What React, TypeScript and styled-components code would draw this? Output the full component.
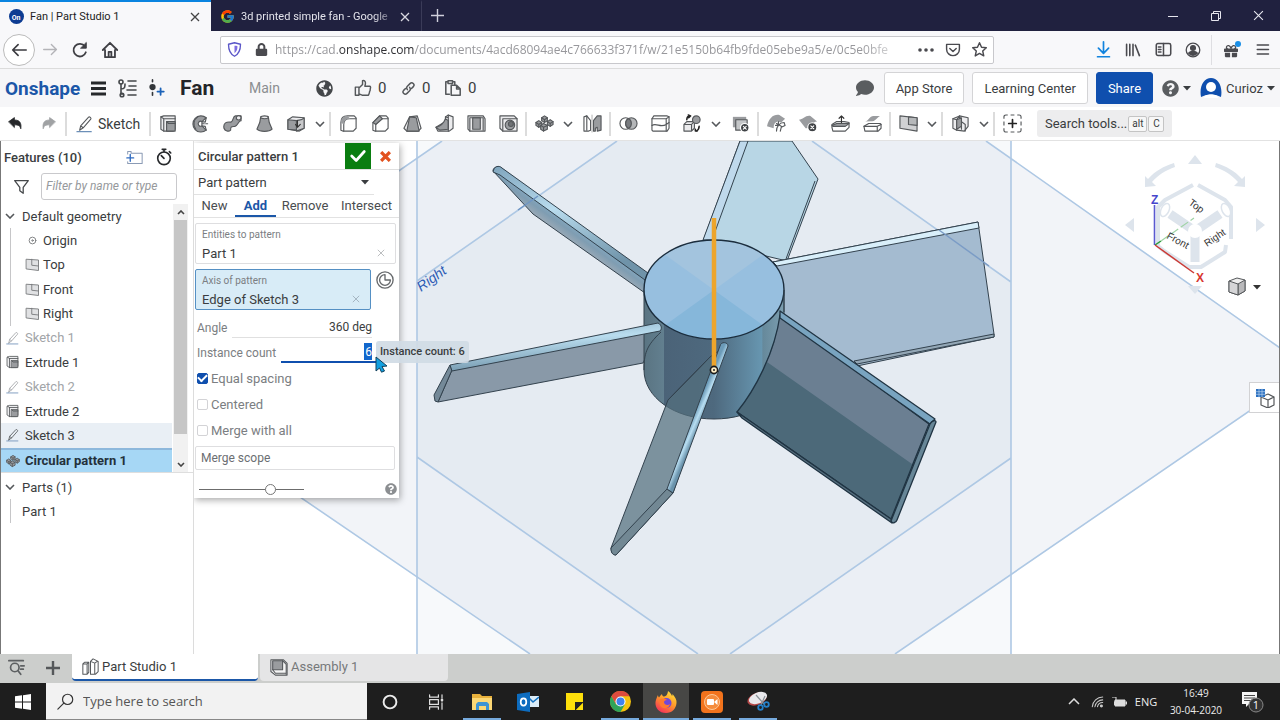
import React from "react";
import styled, { createGlobalStyle, css } from "styled-components";
import { FcGoogle } from "react-icons/fc";
import { FaGlobeAmericas, FaComment, FaLock, FaQuestionCircle, FaGift } from "react-icons/fa";

const ui = `Roboto, "Liberation Sans", sans-serif`;
const sys = `"Open Sans", "Noto Sans", sans-serif`;
const blue = "#0f4fae";

const Global = createGlobalStyle`
  * { box-sizing: border-box; }
  body { margin: 0; font-family: ${ui}; font-size: 13px; color: #3a3d40; background: #fff; }
  button, input, select { font: inherit; color: inherit; }
  button { background: none; border: 0; padding: 0; cursor: pointer; }
  a { color: inherit; text-decoration: none; }
  ul { margin: 0; padding: 0; list-style: none; }
  svg { display: block; flex: none; }
`;

const Page = styled.div`
  display: flex;
  flex-direction: column;
  min-height: 100vh;
`;
const Spacer = styled.div`
  flex: 1;
`;

/* ---------- browser chrome ---------- */
const TitleBar = styled.header`
  display: flex;
  height: 31px;
  background: #20213f;
  font-size: 11px;
`;
const BrowserTab = styled.div<{ $active?: boolean }>`
  display: flex;
  align-items: center;
  gap: 6px;
  width: 211px;
  padding: 0 8px 0 9px;
  color: ${(p) => (p.$active ? "#1c1c22" : "#e2e2ea")};
  background: ${(p) => (p.$active ? "#f8f8fa" : "transparent")};
  border-top: 2px solid ${(p) => (p.$active ? "#0a84e0" : "transparent")};
  border-right: ${(p) => (p.$active ? "0" : "1px solid #3a3b58")};
`;
const TabLabel = styled.a<{ $fade?: boolean }>`
  flex: 1;
  overflow: hidden;
  white-space: nowrap;
  ${(p) =>
    p.$fade &&
    css`
      mask-image: linear-gradient(90deg, #000 88%, rgba(0, 0, 0, 0.3));
    `}
`;
const TinyButton = styled.button`
  display: grid;
  place-items: center;
  width: 16px;
  height: 16px;
`;
const NewTab = styled.button`
  display: grid;
  place-items: center;
  width: 30px;
`;
const WindowButton = styled.button`
  display: grid;
  place-items: center;
  width: 43px;
  color: #e6e6ee;
`;
const NavBar = styled.nav`
  display: flex;
  align-items: center;
  height: 38px;
  padding: 0 3px;
  background: #f8f8fa;
  border-bottom: 1px solid #dcdcdc;
  color: #4a4a4f;
`;
const NavButton = styled.button<{ $ring?: boolean }>`
  display: grid;
  place-items: center;
  width: ${(p) => (p.$ring ? 32 : 30)}px;
  height: ${(p) => (p.$ring ? 32 : 30)}px;
  border-radius: 50%;
  border: ${(p) => (p.$ring ? "1px solid #bbb" : "0")};
  background: ${(p) => (p.$ring ? "#fff" : "transparent")};
`;
const UrlBar = styled.div`
  display: flex;
  align-items: center;
  flex: 0 1 774px;
  min-width: 0;
  height: 28px;
  margin-left: 95px;
  background: #fff;
  border: 1px solid #c8c8cc;
  border-radius: 2px;
`;
const UrlIcon = styled.button`
  display: grid;
  place-items: center;
  width: 27px;
  height: 22px;
`;
const Address = styled.a`
  flex: 1;
  overflow: hidden;
  white-space: nowrap;
  font-family: ${sys};
  font-size: 12px;
  color: #98989c;
  mask-image: linear-gradient(90deg, #000 92%, transparent);
  b {
    font-weight: 400;
    color: #303034;
  }
`;
const NavDivider = styled.span`
  width: 1px;
  height: 30px;
  margin: 0 5px 0 3px;
  background: #dedee2;
`;

/* ---------- document header ---------- */
const DocBar = styled.header`
  display: flex;
  align-items: center;
  height: 38px;
  padding: 0 5px;
  background: #f6f6f8;
  font-size: 15px;
`;
const Brand = styled.a`
  width: 86px;
  font-weight: 700;
  font-size: 19px;
  color: #1b57a8;
`;
const DocIcon = styled.button<{ $w: number }>`
  display: flex;
  align-items: center;
  gap: 6px;
  width: ${(p) => p.$w}px;
`;
const DocTitle = styled.h1`
  margin: 0;
  width: 69px;
  font-size: 21px;
  font-weight: 700;
  color: #222428;
`;
const Branch = styled.a`
  width: 67px;
  font-size: 14px;
  color: #8b8e91;
`;
const HeaderButton = styled.button<{ $primary?: boolean }>`
  height: 32px;
  margin-left: 8px;
  padding: 0 11px;
  font-size: 13px;
  border-radius: 3px;
  border: 1px solid ${(p) => (p.$primary ? blue : "#d4d4d6")};
  color: ${(p) => (p.$primary ? "#fff" : "#3a3d40")};
  background: ${(p) => (p.$primary ? blue : "#fff")};
`;
const MenuButton = styled.button`
  display: flex;
  align-items: center;
  gap: 4px;
  margin-left: 9px;
  font-size: 13px;
`;

/* ---------- tool bar ---------- */
const ToolBar = styled.div`
  display: flex;
  align-items: center;
  height: 34px;
  background: #fff;
  border-bottom: 1px solid #e2e2e2;
`;
const Tool = styled.button`
  display: grid;
  place-items: center;
  width: 32px;
  height: 28px;
`;
const ToolMore = styled.button`
  display: grid;
  place-items: center;
  width: 16px;
  height: 28px;
`;
const ToolSep = styled.span`
  width: 2px;
  height: 24px;
  margin: 0 1px;
  background: #dcdcdc;
`;
const SketchButton = styled.button`
  display: flex;
  align-items: center;
  gap: 4px;
  width: 80px;
  padding-left: 8px;
  font-size: 14px;
`;
const SearchTools = styled.button`
  display: flex;
  align-items: center;
  gap: 1px;
  height: 27px;
  margin-left: 9px;
  padding: 0 8px;
  background: #ededee;
  border-radius: 3px;
  font-size: 13px;
`;
const Key = styled.kbd`
  display: inline-block;
  min-width: 16px;
  padding: 0 3px;
  font: 10px/14px ${ui};
  text-align: center;
  background: #f7f7f7;
  border: 1px solid #c4c4c4;
  border-radius: 2px;
`;

/* ---------- feature list ---------- */
const Main = styled.main`
  display: flex;
  flex: 1;
`;
const Sidebar = styled.aside`
  width: 193px;
  flex: none;
  background: #fff;
  border-left: 1px solid #777;
`;
const SideHead = styled.div`
  display: flex;
  align-items: center;
  height: 32px;
  padding: 0 20px 0 3px;
  gap: 12px;
`;
const SideTitle = styled.h2`
  flex: 1;
  margin: 0;
  font-size: 13px;
  font-weight: 500;
`;
const FilterRow = styled.div`
  display: flex;
  align-items: center;
  gap: 11px;
  height: 26px;
  padding: 0 16px 0 12px;
`;
const FilterInput = styled.input`
  flex: 1;
  min-width: 0;
  height: 27px;
  padding: 0 4px;
  font-size: 12px;
  font-style: italic;
  border: 1px solid #c9c9cc;
  border-radius: 3px;
  &::placeholder {
    color: #96999c;
  }
`;
const ListArea = styled.div`
  display: flex;
  height: 269px;
  margin-top: 5px;
  border-bottom: 1px solid #dedede;
`;
const Tree = styled.ul`
  display: flex;
  flex-direction: column;
  flex: 1;
`;
const Row = styled.li<{ $kind?: "group" | "child" | "part"; $muted?: boolean; $tone?: "hover" | "active" }>`
  display: flex;
  align-items: center;
  flex: 1 1 24px;
  gap: ${(p) => (p.$kind === "group" ? 7 : p.$kind === "child" ? 3 : 5)}px;
  padding-left: ${(p) => (p.$kind === "group" ? 4 : p.$kind === "child" ? 14 : p.$kind === "part" ? 11 : 5)}px;
  color: ${(p) => (p.$muted ? "#a2a5a8" : "#3a3d40")};
  background: ${(p) => (p.$tone === "hover" ? "#e9eff5" : p.$tone === "active" ? "#a6d7f5" : "none")};
  ${(p) =>
    p.$tone === "active" &&
    css`
      font-weight: 700;
      color: #24313b;
      background-clip: padding-box;
      border-top: 2px solid #8db8dc;
    `}
`;
const Branched = styled.ul`
  display: flex;
  flex-direction: column;
  flex: 4 1 96px;
  margin-left: 9px;
  border-left: 1px solid #c6c6c8;
`;
const ScrollTrack = styled.div`
  display: flex;
  flex-direction: column;
  align-items: center;
  width: 15px;
  margin: 0 5px 0 1px;
  background: #f1f1f1;
`;
const ScrollThumb = styled.div`
  flex: 1;
  width: 13px;
  margin-bottom: 22px;
  background: #c6c6c6;
`;
const PartTree = styled.ul`
  display: flex;
  flex-direction: column;
  margin-top: 2px;
`;
const PartRows = styled.ul`
  margin-left: 9px;
  border-left: 1px solid #c6c6c8;
`;
const PartLine = styled(Row)`
  height: 24px;
  flex: none;
`;

/* ---------- viewport ---------- */
const Viewport = styled.section`
  position: relative;
  flex: 1;
  min-width: 0;
  overflow: hidden;
  border-left: 1px solid #dcdcdc;
  border-right: 1px solid #777;
`;
const Scene = styled.svg`
  position: absolute;
  inset: 0;
  width: 100%;
  height: 100%;
`;
const CubeBox = styled.div`
  position: absolute;
  top: 10px;
  right: 8px;
`;
const SideTab = styled.button`
  position: absolute;
  right: 0;
  top: 241px;
  display: grid;
  place-items: center;
  width: 30px;
  height: 31px;
  background: #fff;
  border: 1px solid #d2d2d4;
  border-right: 0;
`;
const Dialog = styled.form`
  position: absolute;
  left: 0;
  top: 2px;
  width: 205px;
  background: #fff;
  box-shadow: 1px 2px 7px rgba(0, 0, 0, 0.35);
`;
const DialogHead = styled.div`
  display: flex;
  align-items: center;
  height: 27px;
  padding: 0 6px 0 4px;
  border-bottom: 1px solid #dfdfdf;
`;
const DialogTitle = styled.h2`
  flex: 1;
  margin: 0;
  font-size: 13px;
  font-weight: 500;
`;
const Accept = styled.button`
  display: grid;
  place-items: center;
  width: 26px;
  height: 26px;
  margin-right: 6px;
  background: #0a7d10;
`;
const KindRow = styled.div`
  display: flex;
  align-items: center;
  position: relative;
  width: 180px;
  height: 25px;
  border-bottom: 1px solid #e2e2e2;
  svg {
    position: absolute;
    right: 5px;
    pointer-events: none;
  }
`;
const KindSelect = styled.select`
  appearance: none;
  width: 100%;
  padding: 0 4px;
  font-size: 13px;
  border: 0;
  background: none;
`;
const ModeTabs = styled.div`
  display: flex;
  height: 23px;
  border-bottom: 1px solid #e2e2e2;
`;
const ModeTab = styled.button<{ $on?: boolean; $w: number }>`
  width: ${(p) => p.$w}px;
  color: ${(p) => (p.$on ? "#1b57a8" : "#4a4d50")};
  font-weight: ${(p) => (p.$on ? 700 : 400)};
  border-bottom: 2px solid ${(p) => (p.$on ? "#1b57a8" : "transparent")};
`;
const PickRow = styled.div`
  display: flex;
  gap: 2px;
  margin: 5px 3px 5px 1px;
`;
const Pick = styled.div<{ $on?: boolean }>`
  flex: 1;
  height: 41px;
  padding: 4px 10px 0 6px;
  border: 1px solid ${(p) => (p.$on ? "#5590c4" : "#dedee0")};
  border-radius: 2px;
  background: ${(p) => (p.$on ? "#d8ecf7" : "#fff")};
`;
const PickLabel = styled.div`
  font-size: 10px;
  line-height: 13px;
  color: #7b7e82;
`;
const PickValue = styled.div`
  display: flex;
  align-items: center;
  justify-content: space-between;
  height: 24px;
`;
const AxisFlip = styled.button`
  display: grid;
  place-items: center;
  width: 23px;
  height: 22px;
`;
const Field = styled.label`
  display: flex;
  align-items: center;
  gap: 5px;
  height: 25px;
  padding-left: 3px;
  font-size: 12px;
  color: #7b7e82;
`;
const FieldLine = styled.span<{ $on?: boolean }>`
  display: flex;
  justify-content: flex-end;
  flex: 1;
  height: 21px;
  align-items: center;
  margin-right: ${(p) => (p.$on ? 23 : 27)}px;
  padding-right: ${(p) => (p.$on ? 4 : 0)}px;
  border-bottom: ${(p) => (p.$on ? `2px solid ${blue}` : "1px solid #e0e0e0")};
`;
const AngleInput = styled.input`
  width: 100px;
  padding: 0;
  border: 0;
  text-align: right;
  color: #3a3d40;
  background: none;
`;
const CountInput = styled.input`
  width: 8px;
  height: 17px;
  padding: 0;
  border: 0;
  text-align: right;
  color: #fff;
  background: #1267cc;
`;
const CheckRow = styled.label`
  display: flex;
  align-items: center;
  gap: 3px;
  height: 26px;
  padding-left: 3px;
  color: #7b7e82;
`;
const Check = styled.input`
  appearance: none;
  display: grid;
  place-items: center;
  width: 11px;
  height: 11px;
  margin: 0;
  border: 1px solid #d3d3d6;
  border-radius: 2px;
  background: #fff;
  &:checked {
    background: ${blue};
    border-color: ${blue};
  }
  &:checked::after {
    content: "";
    width: 7px;
    height: 4px;
    margin-bottom: 2px;
    border: solid #fff;
    border-width: 0 0 2px 2px;
    transform: rotate(-45deg);
  }
`;
const ScopeInput = styled.input`
  display: block;
  width: 200px;
  height: 24px;
  margin: 3px 0 10px 1px;
  padding: 0 5px;
  font-size: 12px;
  border: 1px solid #dedee0;
  border-radius: 2px;
  &::placeholder {
    color: #6b6e72;
    opacity: 1;
  }
`;
const DialogFoot = styled.div`
  display: flex;
  align-items: center;
  justify-content: space-between;
  height: 18px;
  padding: 0 2px 0 5px;
`;
const Slider = styled.input`
  appearance: none;
  width: 105px;
  height: 12px;
  margin: 0;
  background: linear-gradient(#6c6c6c, #6c6c6c) center / 100% 1px no-repeat;
  &::-webkit-slider-thumb {
    appearance: none;
    width: 11px;
    height: 11px;
    border: 1px solid #777;
    border-radius: 50%;
    background: #fff;
  }
`;
const Tip = styled.div`
  position: absolute;
  left: 182px;
  top: 200px;
  padding: 0 4px;
  font-size: 11px;
  font-weight: 500;
  line-height: 22px;
  background: rgba(208, 219, 229, 0.92);
  border-radius: 3px;
`;
const Pointer = styled.svg`
  position: absolute;
  left: 181px;
  top: 215px;
`;

/* ---------- document tabs and task bar ---------- */
const DocTabs = styled.footer`
  display: flex;
  height: 29px;
  padding: 0 0 2px;
  background: #cccecc;
`;
const DocTabTool = styled.button<{ $w: number }>`
  display: grid;
  place-items: center;
  width: ${(p) => p.$w}px;
`;
const DocTab = styled.a<{ $on?: boolean }>`
  display: flex;
  align-items: center;
  gap: 3px;
  width: ${(p) => (p.$on ? 186 : 188)}px;
  margin-right: 2px;
  padding-left: 10px;
  font-size: 13px;
  color: ${(p) => (p.$on ? "#3a3d40" : "#77797b")};
  background: ${(p) => (p.$on ? "#fff" : "#e5e5e6")};
  border-bottom: 2px solid ${(p) => (p.$on ? "#1b57a8" : "transparent")};
  border-radius: 0 0 4px 4px;
`;
const TaskBar = styled.footer`
  display: flex;
  height: 37px;
  background: #1e1e1e;
  color: #ececec;
  font-family: ${sys};
`;
const Start = styled.button`
  display: grid;
  place-items: center;
  width: 46px;
`;
const TaskSearch = styled.label`
  display: flex;
  align-items: center;
  gap: 9px;
  width: 321px;
  padding-left: 11px;
  background: #f2f2f2;
  color: #444;
  border-bottom: 1px solid #888;
`;
const TaskInput = styled.input`
  flex: 1;
  min-width: 0;
  padding: 0;
  border: 0;
  font-size: 13px;
  background: none;
  &::placeholder {
    color: #555;
    opacity: 1;
  }
`;
const TaskButton = styled.button<{ $run?: boolean; $on?: boolean }>`
  display: grid;
  place-items: center;
  position: relative;
  width: 46px;
  background: ${(p) => (p.$on ? "#474745" : "none")};
  &::after {
    content: "";
    position: absolute;
    bottom: 0;
    left: ${(p) => (p.$on ? 0 : 4)}px;
    right: ${(p) => (p.$on ? 0 : 4)}px;
    height: ${(p) => (p.$run ? 2 : 0)}px;
    background: #76aadd;
  }
`;
const Tray = styled.div`
  display: flex;
  align-items: center;
  font-size: 11px;
`;
const TrayButton = styled.button<{ $w: number }>`
  display: grid;
  place-items: center;
  width: ${(p) => p.$w}px;
  height: 37px;
`;
const Clock = styled.button`
  width: 68px;
  font-size: 10px;
  line-height: 17px;
  text-align: center;
`;

/* ---------- drawings ---------- */
type IconProps = { size?: number; children: React.ReactNode; c?: string; w?: number };
const Ico = ({ size = 20, children, c = "#55585b", w = 1.2 }: IconProps) => (
  <svg width={size} height={size} viewBox="0 0 20 20" fill="none" stroke={c} strokeWidth={w} strokeLinejoin="round" strokeLinecap="round">
    {children}
  </svg>
);
const Chev = ({ c = "#55585b" }: { c?: string }) => (
  <svg width="10" height="6" viewBox="0 0 10 6" fill="none" stroke={c} strokeWidth="1.6">
    <path d="M1 1l4 4 4-4" />
  </svg>
);
const Caret = () => (
  <svg width="8" height="5" viewBox="0 0 8 5">
    <path d="M0 0h8L4 4.6z" fill="#3a3d40" />
  </svg>
);
const Cross = ({ s = 10, c = "#555", w = 1.3 }: { s?: number; c?: string; w?: number }) => (
  <svg width={s} height={s} viewBox="0 0 10 10" stroke={c} strokeWidth={w}>
    <path d="M1 1l8 8M9 1L1 9" />
  </svg>
);
const Pencil = ({ size = 18, c = "#55585b" }: { size?: number; c?: string }) => (
  <Ico size={size} c={c}>
    <path d="M4 17l1.200-5L14 2.400c1-.9 3.400.9 2.400 2.200L8 14.200 4 17zM5.200 12L8 14.200" />
    <path d="M1 18.500h16" stroke="#6c8fb8" />
  </Ico>
);
const G = "#9a9c9f";
const L = "#ececee";
const tools: Record<string, React.ReactNode> = {
  extrude: (
    <>
      <path d="M2 3l3-1h12v14l-2 2H5l-3-2z" fill={L} />
      <path d="M5 5h12M5 5v13M2 3l3 2" />
      <rect x="8" y="8" width="9" height="10" fill={G} />
      <path d="M8 8l2 2h7" />
    </>
  ),
  revolve: (
    <>
      <path d="M16 4A8.500 8.500 0 1 0 16 17L11.500 12.500A2.600 2.600 0 1 1 11.500 8z" fill={G} />
      <path d="M11.500 8v4.500M16 4l-1 4.500-3.500-.5M16 17l-1-4-3.500-.5M7 3a9 9 0 0 0-2 13" />
      <path d="M12 10.300h7" strokeDasharray="2 1.500" />
    </>
  ),
  sweep: (
    <>
      <path d="M1 15c-1-6 3-7 7-6.500 3 0 2-6 5-6.500h6v5c-3 0-3 5-6.500 6C9 13.500 8 13 8 17c-2 2-6 1-7-2z" fill={G} />
      <ellipse cx="16.500" cy="4" rx="2.500" ry="2.300" fill={L} />
    </>
  ),
  loft: (
    <>
      <path d="M6 3h8l1 6 3 7c-3 3-13 3-16 0l3-7z" fill={G} />
      <ellipse cx="10" cy="3.500" rx="4" ry="1.500" fill={L} />
    </>
  ),
  thicken: (
    <>
      <path d="M1 6l5-3 12 1v11l-5 3-12-2z" fill={L} />
      <path d="M1 6l9 1v10l-9-1z" fill={G} />
      <path d="M10 7c3-1 5 0 8-3v11l-8 3z" fill="#c8c9cb" />
      <path d="M11 7v6M9 11l2 3 3-3" stroke="#333" />
    </>
  ),
  fillet: (
    <>
      <path d="M2 17V9c0-5 3-7 7-7h7l2 2v11l-3 3H4z" fill="#fff" />
      <path d="M5 18V11c0-4 2-6 6-6h7" />
      <path d="M2 9c0-5 3-7 7-7l3 3C8 5 5 7 5 11z" fill={G} stroke="none" />
    </>
  ),
  chamfer: (
    <>
      <path d="M2 17V9l7-7h7l2 2v11l-3 3H4z" fill="#fff" />
      <path d="M5 18v-7l6-6h7" />
      <path d="M2 9l7-7 3 3-7 6z" fill={G} />
    </>
  ),
  draft: (
    <>
      <path d="M1 15L7 3l8-1 4 13-3 3H4z" fill={L} />
      <path d="M7 3l7 1 3 14H4z" fill={G} />
    </>
  ),
  rib: (
    <>
      <path d="M1 14l10-6V3l3-2 5 2v12l-4 3H3z" fill={L} />
      <path d="M1 14C6 13 9 10 11 5l3 2v9l-9 1z" fill={G} />
      <path d="M14 1v17M11 3l3 1" />
    </>
  ),
  shell: (
    <>
      <path d="M1 2h16l2 3v13H3l-2-2z" fill={L} />
      <path d="M6 4h8v12H6z" fill={G} />
      <path d="M3 4v14M17 4v13M3 4h14" />
    </>
  ),
  hole: (
    <>
      <path d="M1 2h15l3 3v13H4l-3-3z" fill={L} />
      <path d="M4 5h15M4 5v13" />
      <circle cx="11.500" cy="11.500" r="5" fill={G} />
      <circle cx="12.500" cy="10.500" r="2.600" fill="#707376" />
    </>
  ),
  pattern: (
    <>
      <path d="M7 4l3-2 3 2v3l-3 2-3-2zM1 9l3-2 3 2v3l-3 2-3-2zM13 8l3-2 3 2v3l-3 2-3-2zM6 12l3-2 4 2v4l-4 2-3-2z" fill={G} />
      <path d="M7 4l3 2 3-2M1 9l3 2 3-2M13 8l3 2 3-2M6 12l3 2 4-2M10 6v3M4 11v3M16 10v3M9 14v4" />
    </>
  ),
  mirror: (
    <>
      <path d="M1 3l3-1 4 5v10l-2 1H1z" fill="#fff" />
      <path d="M4 2v15M11 7l4-5h4v15l-4 1v-4l-2 1v3h-2z" fill={G} />
      <path d="M9.500 1v18" stroke="#bbb" />
    </>
  ),
  bool: (
    <>
      <circle cx="7" cy="10" r="6" />
      <circle cx="13" cy="10" r="6" fill="#b4b6b8" />
      <path d="M10 4.800a6 6 0 0 1 0 10.400 6 6 0 0 1 0-10.400z" fill="#797c80" />
    </>
  ),
  split: (
    <>
      <path d="M1 5l2-3h14l2 1v12l-2 3H2l-1-1z" fill="#fff" />
      <path d="M1 5h15l3-2M16 5v13M1 12c5-3 9 3 15-1l3-2" />
    </>
  ),
  transform: (
    <>
      <path d="M1 11l3-3h8v7l-3 3H1zM1 11h8v7M9 11l3-3" fill={L} />
      <circle cx="14" cy="6" r="4" fill={G} />
      <path d="M4 6c0-3 1-4 4-4M5.500 1L8 2 6 4M17 13c0 3-1 4-3 5M13 16v2h2" stroke="#222" strokeWidth="1.600" />
    </>
  ),
  del: (
    <>
      <path d="M2 3h14v11H2z" fill={G} stroke="none" />
      <path d="M5 6h12v11H5z" fill="#c4c6c8" />
      <circle cx="14.500" cy="14.500" r="4.500" fill="#3f4245" stroke="#fff" />
      <path d="M13 13l3 3M16 13l-3 3" stroke="#fff" />
    </>
  ),
  modify: (
    <>
      <path d="M0 13C2 4 7 0 13 1l6 4-4 4-4-1c-3 1-4 3-4 7z" fill={G} stroke="none" />
      <path d="M10 18c0-5 3-9 8-9l1 3-4 2-1 4M10 10l5 3M12 8v4h-3" fill="#fff" />
    </>
  ),
  delFace: (
    <>
      <path d="M0 6c4 0 7-5 12-4l7 6c-5 0-8 8-12 7z" fill={G} stroke="none" />
      <circle cx="14" cy="14" r="4.800" fill="#3f4245" stroke="#fff" />
      <path d="M12.500 12.500l3 3M15.500 12.500l-3 3" stroke="#fff" />
    </>
  ),
  moveFace: (
    <>
      <path d="M1 14v-3l5-3h8l5 1v5l-4 4H2z" fill="#fff" />
      <path d="M1 12l5-2 13 0-4 3H2z" fill={G} />
      <path d="M11 9V2M8.500 4.500L11 2l2.500 2.500" stroke="#333" />
    </>
  ),
  replace: (
    <>
      <path d="M2 8c4-1 5-6 9-6h7c-3 1-4 5-8 5.500z" fill={G} stroke="none" />
      <path d="M1 13l5-3h12l1 1v4l-3 3H2z" fill="#fff" />
      <path d="M1 13h14v5M15 13l4-2" />
    </>
  ),
  plane: (
    <>
      <path d="M1 2l18 2v14L1 15z" fill="#d0d1d3" />
      <path d="M10 3l9 1v8l-9-1z" fill="#b6b8ba" />
    </>
  ),
  frame: (
    <>
      <path d="M2 5l7-3 9 2v9l-4 5-8-1-4-2z" fill={L} />
      <path d="M6 6v11M2 5l4 1 3-4M6 10l5-2v8M11 8l4 3v7M9 2l2 6" />
      <path d="M6 6l5-2v9l-5 3z" fill={G} />
    </>
  ),
  addTool: (
    <>
      <path d="M1 5V3a2 2 0 0 1 2-2h2M8 1h4M15 1h2a2 2 0 0 1 2 2v2M19 8v4M19 15v2a2 2 0 0 1-2 2h-2M12 19H8M5 19H3a2 2 0 0 1-2-2v-2M1 12V8" strokeLinecap="butt" />
      <path d="M10 6v8M6 10h8" stroke="#222" strokeWidth="1.800" />
    </>
  ),
};
type ToolItem = [string, string] | "more" | "sep";
const toolItems: ToolItem[] = [
  ["extrude", "Extrude"], ["revolve", "Revolve"], ["sweep", "Sweep"], ["loft", "Loft"], ["thicken", "Thicken"], "more", "sep",
  ["fillet", "Fillet"], ["chamfer", "Chamfer"], ["draft", "Draft"], ["rib", "Rib"], ["shell", "Shell"], ["hole", "Hole"], "sep",
  ["pattern", "Pattern"], "more", ["mirror", "Mirror"], "sep",
  ["bool", "Boolean"], ["split", "Split"], ["transform", "Transform"], "more", ["del", "Delete part"], "sep",
  ["modify", "Modify fillet"], ["delFace", "Delete face"], ["moveFace", "Move face"], ["replace", "Replace face"], "sep",
  ["plane", "Plane"], "more", "sep", ["frame", "Frame"], "more", "sep", ["addTool", "Custom features"],
];

const Fan = () => (
  <Scene viewBox="194 141 1085 513" preserveAspectRatio="xMidYMid slice" role="img" aria-label="Fan model">
    <defs>
      <linearGradient id="rodA" x1="0" y1="0" x2="0.300" y2="1">
        <stop offset="0" stopColor="#7fa5bd" />
        <stop offset="0.450" stopColor="#b9dcee" />
        <stop offset="1" stopColor="#6f93a9" />
      </linearGradient>
      <linearGradient id="body" x1="644" x2="784" y1="0" y2="0" gradientUnits="userSpaceOnUse">
        <stop offset="0" stopColor="#5a7482" />
        <stop offset="0.140" stopColor="#627f8f" />
        <stop offset="0.145" stopColor="#4b6378" />
        <stop offset="0.500" stopColor="#4e697e" />
        <stop offset="0.840" stopColor="#6796b0" />
        <stop offset="0.850" stopColor="#66899b" />
        <stop offset="1" stopColor="#7c9eb0" />
      </linearGradient>
      <linearGradient id="thin" x1="585" x2="572" y1="228" y2="246" gradientUnits="userSpaceOnUse">
        <stop offset="0" stopColor="#86b0ca" />
        <stop offset="0.500" stopColor="#7f9db2" />
        <stop offset="1" stopColor="#a3adb7" />
      </linearGradient>
      <linearGradient id="rodB" x1="692" x2="701" y1="418" y2="422" gradientUnits="userSpaceOnUse">
        <stop offset="0" stopColor="#6c9bb8" />
        <stop offset="0.500" stopColor="#b8def2" />
        <stop offset="1" stopColor="#6a93ac" />
      </linearGradient>
      <clipPath id="cap">
        <ellipse cx="714" cy="289.500" rx="70" ry="49.500" />
      </clipPath>
    </defs>
    <rect x="-400" y="-400" width="2400" height="1600" fill="#fff" />
    <path d="M442 141h544l294 206v43L895 654H530L193 424V313z" fill="#f2f4f8" />
    <path d="M417 141h395l199 141v372H698L417 457z" fill="#c5d3e2" fillOpacity="0.140" />
    <path d="M617 141h394v317L730 654H417V281z" fill="#c5d3e2" fillOpacity="0.140" />
    <g fill="none" stroke="#aec8e4" strokeWidth="1.600">
      <path d="M193 313L442 141M986 141l294 207M193 424l337 230M1280 390L895 654" />
      <path d="M417 457l281 197M1011 458L730 654M417 141v513M1011 141v513M417 281L617 141M812 141l199 141" />
    </g>
    <text x="421" y="292" transform="rotate(-36 421 292)" fontFamily="Liberation Sans, sans-serif" fontSize="14" fontStyle="italic" fill="#2d5bb5">
      Right
    </text>
    <g stroke="#33424e" strokeWidth="1" strokeLinejoin="round">
      <path d="M740 141h52l26 38-31 82-84-20z" fill="#b8d6e5" />
      <path d="M740 141h8l-36 99h-9z" fill="#bfd9ec" />
      <path d="M815 181l-29 78" />
      <path d="M773 262l205-40 16 112v3l-137 29-77-50z" fill="#a4bbd0" />
      <path d="M773 262l205-40 1 6-202 38z" fill="#d9effa" />
      <path d="M994 334l-140 27 3 3 137-27z" fill="#93a7b6" />
      <path d="M493 171l40 43 112 79v-18L500 167c-4-1-7 1-7 4z" fill="url(#thin)" />
      <path d="M493 172c1-6 6-7 9-4l146 105-3 7L500 175z" fill="url(#rodA)" />
      <path d="M452 370l-14 32 205-39 18-34z" fill="#8999a8" />
      <path d="M644 290v80c0 27 30 49 70 49 40 0 70-22 70-49v-80z" fill="url(#body)" />
    </g>
    <path d="M783 320v75l-20 12z" fill="#4c6979" />
    <g stroke="#33424e" strokeWidth="1" strokeLinejoin="round">
      <path d="M661 332c-15 14-17 22-17 38" fill="none" />
      <path d="M450 365l-16 30 1 6 3 1 14-32z" fill="#748998" />
      <path d="M450 365l208-42c4 2 4 6 2 8l-208 40z" fill="url(#rodA)" />
      <path d="M668 400L611 548c0 4 2 7 5 7l57-62 51-146-14 10z" fill="#536f7d" fillOpacity="0.720" />
      <path d="M710 357l-42 43" fill="none" />
      <path d="M611 548l56-59 6 4-57 62c-4 0-5-3-5-7z" fill="#728894" />
      <path d="M720 346c1-5 8-4 8 0l-55 147-6-4z" fill="url(#rodB)" />
    </g>
    <path d="M780 315l149 109-38 97-154-109c20-25 37-60 43-97z" fill="#4c6979" />
    <path d="M780 315l149 109-17 40-145-102c7-14 10-30 13-47z" fill="#6b7f92" />
    <g stroke="#203443" strokeWidth="1.300" strokeLinejoin="round">
      <path d="M780 315l149 109-38 95-154-107c18-22 38-60 43-97z" fill="none" />
      <path d="M737 412l154 107 1 4-150-105z" fill="#587181" />
      <path d="M780 311l155 108-5 5-150-106z" fill="#79a4c0" />
      <path d="M930 424c2-4 6-4 6-2l-39 98c-1 3-5 4-6 1z" fill="#678697" />
    </g>
    <g clipPath="url(#cap)">
      <path d="M640 235h150v110H640z" fill="#97bfdf" />
      <path d="M714 290l-75-54h150z" fill="#a3c4de" />
      <path d="M714 290l-75 54h150z" fill="#86b7da" />
    </g>
    <ellipse cx="714" cy="289.500" rx="70" ry="49.500" fill="none" stroke="#1b2d3d" strokeWidth="1.400" />
    <path d="M784 290v22" stroke="#33424e" />
    <path d="M939 230l50 36" stroke="#7b9cc6" strokeWidth="1.500" />
    <path d="M518 210l20-14" stroke="#6f95c4" strokeWidth="1.500" />
    <path d="M714 218v152" stroke="#eda52c" strokeWidth="4.500" />
    <circle cx="714" cy="370" r="3.600" fill="#fff0c8" stroke="#1a1a1a" strokeWidth="1.600" />
    <circle cx="714" cy="370" r="1" fill="#222" />
  </Scene>
);

const ViewCube = () => (
  <svg width="146" height="150" viewBox="1125 151 146 150" fontFamily="Liberation Sans, sans-serif">
    <path d="M1195 183l36 19v45l-30 20h-12l-32-20v-45z" fill="#fff" />
    <g fill="#dde4ec">
      <path d="M1195 155l7 9h-14zM1125 225l9-7v14zM1265 225l-9-7v14zM1195 294l-7-8h14z" />
      <path d="M1145 187v-11l3 3c7-8 16-13 26-16l1 4c-9 3-17 8-23 15l4 4zM1245 187v-11l-3 3c-7-8-16-13-26-16l-1 4c9 3 17 8 23 15l-4 4z" />
    </g>
    <g fill="none" stroke="#dde4ec" strokeLinejoin="round">
      <path d="M1193 185l-28 15-7 7v39l6 5 25 16h12l24-15 1-7M1198 185l27 15 6 7v32" strokeWidth="4" />
      <path d="M1195 231l-25-17M1195 231l25-17M1195 231v33" strokeWidth="9" />
    </g>
    <g fill="#fff">
      <path d="M1190 262h10v2h-10z" />
      <circle cx="1195" cy="231" r="7" />
      <ellipse cx="1165" cy="210" rx="4" ry="7" transform="rotate(25 1165 210)" stroke="#dde4ec" strokeWidth="1.500" />
      <ellipse cx="1226" cy="210" rx="4" ry="7" transform="rotate(-25 1226 210)" stroke="#dde4ec" strokeWidth="1.500" />
    </g>
    <path d="M1154.500 245v-40" stroke="#5a5ad0" strokeWidth="1.600" />
    <path d="M1155 245l6-4" stroke="#2a9d3a" strokeWidth="1.500" />
    <path d="M1161 241l33-23" stroke="#9fd3a4" strokeWidth="1.200" strokeDasharray="9 3" />
    <path d="M1155 245l39 28" stroke="#cc3a35" strokeWidth="1.500" />
    <text x="1151" y="204" fontSize="12" fontWeight="700" fill="#4646cc">Z</text>
    <text x="1196" y="282" fontSize="12" fontWeight="700" fill="#d8372f">X</text>
    <g fontSize="10" fill="#333">
      <text x="1188" y="204" transform="rotate(36 1188 204)">Top</text>
      <text x="1166" y="238" transform="rotate(28 1166 238)">Front</text>
      <text x="1207" y="247" transform="rotate(-34 1207 247)">Right</text>
    </g>
    <g stroke="#55585b" strokeLinejoin="round">
      <path d="M1229 281l8-3 8 2v11l-7 4-9-3z" fill="#eee" />
      <path d="M1238 284l7-4v11l-7 4z" fill="#b9b9bb" />
      <path d="M1229 281l9 3v11l-9-3z" fill="#d5d5d7" />
    </g>
    <path d="M1253 285h8l-4 4.500z" fill="#333" />
  </svg>
);

const PlaneIcon = () => (
  <Ico size={15} c="#77797c">
    <path d="M2 3l16 1v14L2 16z" fill="#e0e1e3" />
    <path d="M9 3v8l9 1" />
  </Ico>
);

export default function App() {
  return (
    <Page>
      <Global />
      <TitleBar>
        <BrowserTab $active>
          <svg width="15" height="15" viewBox="0 0 15 15">
            <circle cx="7.500" cy="7.500" r="7.500" fill="#0d3c92" />
            <text x="7" y="10.500" fontSize="7" fontWeight="700" fill="#fff" textAnchor="middle" fontFamily="Roboto, sans-serif">On</text>
          </svg>
          <TabLabel href="#studio">Fan | Part Studio 1</TabLabel>
          <TinyButton type="button" aria-label="Close tab"><Cross c="#444" /></TinyButton>
        </BrowserTab>
        <BrowserTab>
          <FcGoogle size={15} />
          <TabLabel href="#search" $fade>3d printed simple fan - Google</TabLabel>
          <TinyButton type="button" aria-label="Close tab"><Cross c="#d8d8e0" /></TinyButton>
        </BrowserTab>
        <NewTab type="button" aria-label="New tab">
          <svg width="13" height="13" viewBox="0 0 13 13" stroke="#d0d0dc" strokeWidth="1.400"><path d="M6.500 0v13M0 6.500h13" /></svg>
        </NewTab>
        <Spacer />
        <WindowButton type="button" aria-label="Minimise"><svg width="10" height="10" viewBox="0 0 10 10" stroke="currentColor"><path d="M0 5.500h10" /></svg></WindowButton>
        <WindowButton type="button" aria-label="Restore">
          <svg width="10" height="10" viewBox="0 0 10 10" fill="none" stroke="currentColor"><path d="M.5 2.500h7v7h-7zM2.500 2.500v-2h7v7h-2" /></svg>
        </WindowButton>
        <WindowButton type="button" aria-label="Close"><Cross c="#e6e6ee" w={1} s={11} /></WindowButton>
      </TitleBar>

      <NavBar>
        <NavButton type="button" $ring aria-label="Back"><Ico size={18} c="#3a3a3f" w={1.8}><path d="M18 10H3M9 4l-6 6 6 6" /></Ico></NavButton>
        <NavButton type="button" aria-label="Forward"><Ico size={17} c="#b4b4b8" w={1.6}><path d="M2 10h15M11 4l6 6-6 6" /></Ico></NavButton>
        <NavButton type="button" aria-label="Reload">
          <Ico size={18} c="#3f3f44" w={2}><path d="M16.500 12.500A7 7 0 1 1 15.500 6" /><path d="M17 2v6h-6z" fill="#3f3f44" strokeWidth="1" /></Ico>
        </NavButton>
        <NavButton type="button" aria-label="Home">
          <Ico size={18} c="#3f3f44" w={2}><path d="M2 10l8-8 8 8M4.500 10v8h11v-8M8.500 17v-5h3v5" /></Ico>
        </NavButton>
        <UrlBar>
          <UrlIcon type="button" aria-label="Protection">
            <Ico size={15} c="#5b57c8" w={1.8}><path d="M10 1l8 2c0 8-2 13-8 16C4 16 2 11 2 3z" /><path d="M10 5c0 0 4 0 4 1 0 5-2 7-4 9z" fill="#7d6be0" stroke="none" /></Ico>
          </UrlIcon>
          <UrlIcon type="button" aria-label="Site information"><FaLock size={13} /></UrlIcon>
          <Address href="#url">https://cad.<b>onshape.com</b>/documents/4acd68094ae4c766633f371f/w/21e5150b64fb9fde05ebe9a5/e/0c5e0bfe</Address>
          <UrlIcon type="button" aria-label="Page actions">
            <svg width="16" height="4" viewBox="0 0 16 4" fill="#4a4a4f"><circle cx="2" cy="2" r="1.800" /><circle cx="8" cy="2" r="1.800" /><circle cx="14" cy="2" r="1.800" /></svg>
          </UrlIcon>
          <UrlIcon type="button" aria-label="Save to Pocket">
            <Ico size={16} c="#4a4a4f" w={1.8}><path d="M2 3h16v6c0 5-4 8-8 8s-8-3-8-8zM6 8l4 4 4-4" /></Ico>
          </UrlIcon>
          <UrlIcon type="button" aria-label="Bookmark">
            <Ico size={17} c="#4a4a4f" w={1.7}><path d="M10 2l2.400 5.300 5.600.6-4.200 3.900 1.200 5.700-5-2.900-5 2.900 1.200-5.700L2 7.900l5.600-.6z" /></Ico>
          </UrlIcon>
        </UrlBar>
        <Spacer />
        <NavButton type="button" aria-label="Downloads"><Ico size={17} c="#1183de" w={2}><path d="M10 1v13M4 8.500l6 6 6-6M3 18.500h14" /></Ico></NavButton>
        <NavButton type="button" aria-label="Library"><Ico size={16} w={2} c="#4a4a4f"><path d="M2 3v14M6 3v14M10 3v14M13 4l5 13" /></Ico></NavButton>
        <NavButton type="button" aria-label="Sidebars">
          <Ico size={17} w={1.8} c="#4a4a4f"><rect x="1.500" y="3" width="17" height="14" rx="2" /><path d="M10 3v14M4 7h3M4 10h3M4 13h3" /></Ico>
        </NavButton>
        <NavButton type="button" aria-label="Account">
          <Ico size={16} w={1.6} c="#4a4a4f"><circle cx="10" cy="10" r="8.500" /><circle cx="10" cy="7.500" r="3" fill="#4a4a4f" /><path d="M4.500 14c2-3 9-3 11 0-3 3.500-8 3.500-11 0z" fill="#4a4a4f" /></Ico>
        </NavButton>
        <NavDivider />
        <NavButton type="button" aria-label="What's new">
          <svg width="18" height="18" viewBox="0 0 18 18"><g transform="translate(1 3)"><FaGift size={14} /></g><circle cx="15" cy="3" r="3" fill="#1a8fe6" /></svg>
        </NavButton>
        <NavButton type="button" aria-label="Menu"><Ico size={15} w={2} c="#4a4a4f"><path d="M3 4h15M3 10h15M3 16h15" /></Ico></NavButton>
      </NavBar>

      <DocBar>
        <Brand href="#home">Onshape</Brand>
        <DocIcon type="button" $w={26} aria-label="Main menu">
          <svg width="15" height="15" viewBox="0 0 15 15" stroke="#26282b" strokeWidth="2.800"><path d="M0 2h15M0 7.500h15M0 13h15" /></svg>
        </DocIcon>
        <DocIcon type="button" $w={31} aria-label="Versions">
          <Ico size={20} w={1.6} c="#44474a"><circle cx="4" cy="4" r="2" /><path d="M4 6v10M4 11c4 0 4-2 4-5M4 16h2" /><circle cx="5" cy="17" r="1.800" /><path d="M11 3h8M12 8h7M10 12h9M11 17h8" /></Ico>
        </DocIcon>
        <DocIcon type="button" $w={32} aria-label="Create version">
          <Ico size={18} w={1.8} c="#33363a"><path d="M5 1v2M5 15v3" /><circle cx="5" cy="9" r="2.600" fill="#33363a" /><path d="M10.500 14h7M14 10.500v7" stroke="#1b62b8" strokeWidth="2" /></Ico>
        </DocIcon>
        <DocTitle>Fan</DocTitle>
        <Branch href="#main">Main</Branch>
        <DocIcon type="button" $w={38} aria-label="Public document"><FaGlobeAmericas size={17} color="#44474a" /></DocIcon>
        <DocIcon type="button" $w={47} aria-label="Likes">
          <Ico size={18} w={1.6}><path d="M1.500 9h4v9h-4zM5.500 10l4-4V2c3-1 4 2 2.500 6h5.500c1.500 1 1 2 .5 3 0 1 .3 2-.7 3 0 1.500-.5 2-1.300 4H9l-3.500-1.500" /></Ico>0
        </DocIcon>
        <DocIcon type="button" $w={43} aria-label="Links">
          <Ico size={15} w={2}><path d="M8.500 11.500c-1.500-2-1-3.500 0-4.500l3.500-3.500c3-3 7 1.200 4.500 4L14 10" /><path d="M11.500 8.500c1.500 2 1 3.500 0 4.500L8 16.500c-3 3-7-1.200-4.500-4L6 10" /></Ico>0
        </DocIcon>
        <DocIcon type="button" $w={40} aria-label="Copies">
          <Ico size={18} w={1.7}><path d="M6 17H2V3h2.500M12 6V3H9.500M4.500 2h5v3h-5zM8 7h6l4 4v7H8zM14 7v4h4" /></Ico>0
        </DocIcon>
        <Spacer />
        <DocIcon type="button" $w={20} aria-label="Comments"><FaComment size={18} color="#5a5d60" /></DocIcon>
        <HeaderButton type="button">App Store</HeaderButton>
        <HeaderButton type="button">Learning Center</HeaderButton>
        <HeaderButton type="button" $primary>Share</HeaderButton>
        <MenuButton type="button" aria-label="Help"><FaQuestionCircle size={17} color="#5a5d60" /><Caret /></MenuButton>
        <MenuButton type="button">
          <svg width="22" height="20" viewBox="0 0 22 20"><path d="M1 19C-1 8 4 0 11 0s12 8 10 19l-5-2H6z" fill={blue} /><circle cx="11" cy="9" r="5" fill="#fff" /><path d="M4 20c1-5 13-5 14 0z" fill="#fff" /></svg>
          Curioz
          <Caret />
        </MenuButton>
      </DocBar>

      <ToolBar>
        <Tool type="button" aria-label="Undo"><Ico size={16} c="#26282b" w={1}><path d="M1 7l7-5v3c7 0 9 4 8 11-1-4-3-5-8-5v3z" fill="#26282b" /></Ico></Tool>
        <Tool type="button" aria-label="Redo"><Ico size={16} c="#a0a2a4" w={1}><path d="M19 7l-7-5v3C5 5 3 9 4 16c1-4 3-5 8-5v3z" fill="#a0a2a4" /></Ico></Tool>
        <ToolSep />
        <SketchButton type="button"><Pencil />Sketch</SketchButton>
        <ToolSep />
        {toolItems.map((t, i) =>
          t === "sep" ? (
            <ToolSep key={i} />
          ) : t === "more" ? (
            <ToolMore key={i} type="button" aria-label="More tools"><Chev /></ToolMore>
          ) : (
            <Tool key={i} type="button" aria-label={t[1]}><Ico size={19}>{tools[t[0]]}</Ico></Tool>
          )
        )}
        <SearchTools type="button">Search tools...<Key>alt</Key><Key>C</Key></SearchTools>
      </ToolBar>

      <Main>
        <Sidebar>
          <SideHead>
            <SideTitle>Features (10)</SideTitle>
            <Ico size={17} c="#8b9bb5"><path d="M6 5V3h-4v3M6 5h13v12H2v-2" /><path d="M1 10.500h8M5 6.500v8" stroke="#2f6bc0" strokeWidth="1.600" /></Ico>
            <Ico size={18} c="#26282b" w={1.8}><circle cx="10" cy="11.500" r="7" /><path d="M8 1.500h4M10 2v2M7 8.500l3 3M16 4l1.500 1.500" /></Ico>
          </SideHead>
          <FilterRow>
            <Ico size={17} c="#44474a" w={1.5}><path d="M2 3h16l-6 8v7l-4-3v-4z" /></Ico>
            <FilterInput aria-label="Filter features" placeholder="Filter by name or type" />
          </FilterRow>
          <ListArea>
            <Tree>
              <Row $kind="group"><Chev />Default geometry</Row>
              <Branched>
                <Row $kind="child">
                  <Ico size={15} c="#77797c"><circle cx="10" cy="10" r="4.500" /><circle cx="10" cy="10" r="1" /></Ico>Origin
                </Row>
                <Row $kind="child"><PlaneIcon />Top</Row>
                <Row $kind="child"><PlaneIcon />Front</Row>
                <Row $kind="child"><PlaneIcon />Right</Row>
              </Branched>
              <Row $muted><Pencil size={14} c="#a2a5a8" />Sketch 1</Row>
              <Row><Ico size={14}>{tools.extrude}</Ico>Extrude 1</Row>
              <Row $muted><Pencil size={14} c="#a2a5a8" />Sketch 2</Row>
              <Row><Ico size={14}>{tools.extrude}</Ico>Extrude 2</Row>
              <Row $tone="hover"><Pencil size={14} />Sketch 3</Row>
              <Row $tone="active"><Ico size={14}>{tools.pattern}</Ico>Circular pattern 1</Row>
            </Tree>
            <ScrollTrack>
              <TinyButton type="button" aria-label="Scroll up">
                <svg width="8" height="5" viewBox="0 0 8 5" fill="none" stroke="#444" strokeWidth="1.600"><path d="M1 4l3-3 3 3" /></svg>
              </TinyButton>
              <ScrollThumb />
              <TinyButton type="button" aria-label="Scroll down">
                <svg width="8" height="5" viewBox="0 0 8 5" fill="none" stroke="#444" strokeWidth="1.600"><path d="M1 1l3 3 3-3" /></svg>
              </TinyButton>
            </ScrollTrack>
          </ListArea>
          <PartTree>
            <PartLine $kind="group"><Chev />Parts (1)</PartLine>
            <li><PartRows><PartLine $kind="part">Part 1</PartLine></PartRows></li>
          </PartTree>
        </Sidebar>

        <Viewport>
          <Fan />
          <CubeBox><ViewCube /></CubeBox>
          <SideTab type="button" aria-label="Configurations">
            <Ico size={20}><path d="M6 9l7-3 6 3v8l-6 3-7-3zM6 9l7 3 6-3M13 12v8" /><path d="M1 1h9v8H1z" fill="#2a6fc0" stroke="none" /><path d="M4 1v8M7 1v8M1 3.700h9M1 6.300h9" stroke="#b9d2ee" strokeWidth="0.700" /></Ico>
          </SideTab>
          <Dialog onSubmit={(e) => e.preventDefault()}>
            <DialogHead>
              <DialogTitle>Circular pattern 1</DialogTitle>
              <Accept type="submit" aria-label="Accept"><Ico size={18} c="#fff" w={3}><path d="M3 10l5 5 9-10" /></Ico></Accept>
              <TinyButton type="button" aria-label="Cancel"><Cross s={11} c="#e2521f" w={3} /></TinyButton>
            </DialogHead>
            <KindRow>
              <KindSelect aria-label="Pattern type" defaultValue="part"><option value="part">Part pattern</option></KindSelect>
              <Caret />
            </KindRow>
            <ModeTabs>
              <ModeTab type="button" $w={41}>New</ModeTab>
              <ModeTab type="button" $w={41} $on>Add</ModeTab>
              <ModeTab type="button" $w={58}>Remove</ModeTab>
              <ModeTab type="button" $w={65}>Intersect</ModeTab>
            </ModeTabs>
            <PickRow>
              <Pick>
                <PickLabel>Entities to pattern</PickLabel>
                <PickValue>Part 1<Cross s={8} c="#b9bbbd" w={1.2} /></PickValue>
              </Pick>
            </PickRow>
            <PickRow>
              <Pick $on>
                <PickLabel>Axis of pattern</PickLabel>
                <PickValue>Edge of Sketch 3<Cross s={8} c="#a3b4c0" w={1.2} /></PickValue>
              </Pick>
              <AxisFlip type="button" aria-label="Opposite direction">
                <Ico size={18} c="#66696c" w={1.5}><circle cx="10" cy="10" r="9" /><path d="M10 4v6h6M10 4a6 6 0 1 0 6 6" /></Ico>
              </AxisFlip>
            </PickRow>
            <Field>Angle<FieldLine><AngleInput defaultValue="360 deg" /></FieldLine></Field>
            <Field>Instance count<FieldLine $on><CountInput defaultValue="6" /></FieldLine></Field>
            <CheckRow><Check type="checkbox" defaultChecked />Equal spacing</CheckRow>
            <CheckRow><Check type="checkbox" />Centered</CheckRow>
            <CheckRow><Check type="checkbox" />Merge with all</CheckRow>
            <ScopeInput aria-label="Merge scope" placeholder="Merge scope" />
            <DialogFoot>
              <Slider type="range" aria-label="Preview opacity" defaultValue={70} />
              <FaQuestionCircle size={12} color="#8b8e91" />
            </DialogFoot>
          </Dialog>
          <Tip role="tooltip">Instance count: 6</Tip>
          <Pointer width="13" height="17" viewBox="0 0 13 17"><path d="M1 1l11 9-5 .5 2.500 4.500-3 1.200L4.500 12 1 15z" fill="#12a0e0" stroke="#12405c" /></Pointer>
        </Viewport>
      </Main>

      <DocTabs>
        <DocTabTool type="button" $w={33} aria-label="Tab manager">
          <Ico size={17} w={2} c="#5d6062"><circle cx="8" cy="10" r="5" /><path d="M12 14l3 4M1 2h17M15 8h4M15 12h3" /></Ico>
        </DocTabTool>
        <DocTabTool type="button" $w={39} aria-label="Insert tab">
          <svg width="14" height="14" viewBox="0 0 14 14" stroke="#55585a" strokeWidth="2.400"><path d="M7 0v14M0 7h14" /></svg>
        </DocTabTool>
        <DocTab href="#studio" $on>
          <Ico size={17}><path d="M1 7l2-2h5v12l-2 2H1zM1 7h5v12M6 7l2-2M10 4l3-3 6 3v12l-3 3h-6zM10 4l5 2v13M15 6l3-2" /></Ico>Part Studio 1
        </DocTab>
        <DocTab href="#assembly">
          <Ico size={18}><path d="M1 2h14l4 4v13H6l-5-4z" fill="#f4f4f4" /><path d="M3 3h11v10H3z" fill={G} /><path d="M14 3l4 4v11M3 13l3 4h12" /></Ico>Assembly 1
        </DocTab>
      </DocTabs>

      <TaskBar>
        <Start type="button" aria-label="Start">
          <svg width="16" height="16" viewBox="0 0 16 16" fill="#fff"><path d="M0 2.300L7 1.300v6.300H0zM8 1.200L16 0v7.600H8zM0 8.500h7v6.300l-7-1zM8 8.500h8V16l-8-1.200z" /></svg>
        </Start>
        <TaskSearch>
          <Ico size={17} c="#333" w={1.4}><circle cx="12.500" cy="7.500" r="6" /><path d="M8 12l-7 7" /></Ico>
          <TaskInput aria-label="Search" placeholder="Type here to search" />
        </TaskSearch>
        <TaskButton type="button" aria-label="Cortana"><Ico size={16} c="#ececec" w={2.4}><circle cx="10" cy="10" r="8" /></Ico></TaskButton>
        <TaskButton type="button" aria-label="Task view">
          <Ico size={16} c="#e0e0e0" w={1.5}><path d="M2 1v3h11V1M2 7h11v6H2zM2 19v-3h11v3M17.500 1v4M17.500 11v8" /><path d="M17.500 7v1" strokeWidth="3" /></Ico>
        </TaskButton>
        <TaskButton type="button" $run aria-label="File Explorer">
          <svg width="20" height="18" viewBox="0 0 20 18"><path d="M0 1h8l2 2h10v14H0z" fill="#e8b13c" /><path d="M0 5h20v12H0z" fill="#fbd775" /><path d="M4 17v-6l2-2h9l2 2v6h-3v-4H7v4z" fill="#3d93d2" /></svg>
        </TaskButton>
        <TaskButton type="button" aria-label="Outlook">
          <svg width="22" height="20" viewBox="0 0 22 20"><path d="M12 4h10v11H12z" fill="#dcecf8" /><path d="M12 6l4 4 6-5" fill="none" stroke="#1373c4" strokeWidth="1.600" /><path d="M0 2l13-2v20L0 18z" fill="#0d6cbf" /><ellipse cx="6.500" cy="10" rx="2.800" ry="3.600" fill="none" stroke="#fff" strokeWidth="1.700" /></svg>
        </TaskButton>
        <TaskButton type="button" aria-label="Sticky Notes">
          <svg width="17" height="17" viewBox="0 0 17 17"><path d="M0 0h17v17H0z" fill="#fddf0b" /><path d="M9 9h8v1l-7 7H9z" fill="#222" /><path d="M17 10v7h-7z" fill="#fddf0b" /></svg>
        </TaskButton>
        <TaskButton type="button" $run aria-label="Chrome">
          <svg width="21" height="21" viewBox="0 0 20 20"><circle cx="10" cy="10" r="10" fill="#f4c20d" /><path d="M10 5h8.700A10 10 0 0 0 1.300 5L6 13z" fill="#dd4b3e" /><path d="M1.300 5a10 10 0 0 0 8.700 15l4.300-7.500L10 14 5.700 12.500z" fill="#2fa35a" /><circle cx="10" cy="10" r="4.800" fill="#fff" /><circle cx="10" cy="10" r="3.800" fill="#3f82ee" /></svg>
        </TaskButton>
        <TaskButton type="button" $run $on aria-label="Firefox">
          <svg width="22" height="22" viewBox="0 0 22 22">
            <defs><linearGradient id="fx" x1="0.800" y1="0" x2="0.200" y2="1"><stop offset="0" stopColor="#ffe23c" /><stop offset="0.450" stopColor="#ff9a2a" /><stop offset="1" stopColor="#f32a5c" /></linearGradient></defs>
            <path d="M11 22C4 22 0 17 0.500 11 1 8 2 6 3 4c0 1 .5 2 1 2.500C5 5 6 4 7 3c0 1 .5 2 1.500 2.500 2 0 4-1 4.500-5.500 3 2 3.500 4 4 5 .5-.5.5-1 .5-2C20 6 22 9 21.500 12 21 18 17 22 11 22z" fill="url(#fx)" />
            <circle cx="11.500" cy="12" r="5" fill="#7048d8" /><path d="M4 9c2-2 6-2 8 0-2 0-3 1-3 2 0 3 4 4 6 2-1 5-8 6-10 1z" fill="#ff7a2e" />
          </svg>
        </TaskButton>
        <TaskButton type="button" $run aria-label="Screen recorder">
          <svg width="22" height="22" viewBox="0 0 22 22"><rect width="22" height="22" rx="4" fill="#f2731c" /><circle cx="11" cy="11" r="7.500" fill="#f58c3c" stroke="#ffc795" /><rect x="6" y="8" width="7" height="6" rx="1" fill="#fff" /><path d="M13 11l3.500-3v6z" fill="#fff" /></svg>
        </TaskButton>
        <TaskButton type="button" $run aria-label="Snipping Tool">
          <svg width="23" height="21" viewBox="0 0 23 21"><ellipse cx="10" cy="8" rx="10" ry="6" fill="#b44848" transform="rotate(-22 10 8)" /><ellipse cx="11" cy="7" rx="9.500" ry="5.500" fill="#e9e9ec" transform="rotate(-22 11 7)" /><path d="M9 4l8 9M18 5l-4 9" stroke="#8b9298" strokeWidth="1.200" /><g fill="none" stroke="#2580c8" strokeWidth="1.800"><circle cx="13.500" cy="16.500" r="2.300" /><circle cx="19.500" cy="13.500" r="2.300" /></g></svg>
        </TaskButton>
        <Spacer />
        <Tray>
          <TrayButton type="button" $w={24} aria-label="Hidden icons"><svg width="12" height="7" viewBox="0 0 12 7" fill="none" stroke="#ddd" strokeWidth="1.500"><path d="M1 6l5-5 5 5" /></svg></TrayButton>
          <TrayButton type="button" $w={22} aria-label="Network">
            <Ico size={13} c="#c9c9c9" w={1.6}><path d="M2 18A16 16 0 0 1 18 3M6 18A12 12 0 0 1 18 7.500M10 18a8 8 0 0 1 8-6.500" /><circle cx="16" cy="17" r="1.500" fill="#ddd" /></Ico>
          </TrayButton>
          <TrayButton type="button" $w={22} aria-label="Battery">
            <svg width="15" height="10" viewBox="0 0 15 10"><path d="M3 3h10v6H3z" fill="#ddd" stroke="#ddd" /><path d="M13.500 4.500h1.500v3h-1.500z" fill="#ddd" /><path d="M0 0h4v3L2.500 5v3" fill="none" stroke="#ddd" /></svg>
          </TrayButton>
          <TrayButton type="button" $w={32}>ENG</TrayButton>
          <Clock type="button">16:49<br />30-04-2020</Clock>
          <TrayButton type="button" $w={44} aria-label="Notifications, 1 new">
            <svg width="24" height="22" viewBox="0 0 24 22"><path d="M2 1h15v12H9l-3 3v-3H2z" fill="#f4f4f4" /><path d="M4 4.500h11M4 7h11M4 9.500h8" stroke="#444" /><circle cx="16" cy="14" r="7" fill="#333" stroke="#888" /><text x="16" y="18" fontSize="11" textAnchor="middle" fill="#fff" fontFamily="Open Sans, sans-serif">1</text></svg>
          </TrayButton>
          <TrayButton type="button" $w={6} aria-label="Show desktop" />
        </Tray>
      </TaskBar>
    </Page>
  );
}
